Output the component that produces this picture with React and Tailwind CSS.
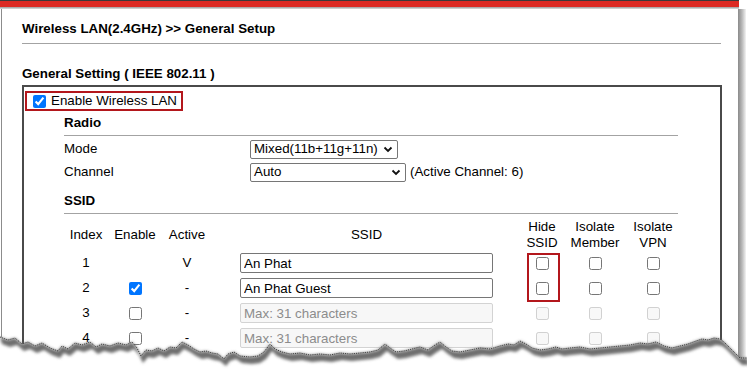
import React from "react";

const rows = [
  { index: 1, enable: null, active: "V", ssid: "An Phat", on: true },
  { index: 2, enable: true, active: "-", ssid: "An Phat Guest", on: true },
  { index: 3, enable: false, active: "-", ssid: "", on: false },
  { index: 4, enable: false, active: "-", ssid: "", on: false },
];

// torn paper edge along the bottom of the capture
const tear = [
  [0, 337], [8, 340], [15, 338], [22, 344], [28, 342], [35, 346], [42, 343], [50, 348],
  [58, 351], [62, 346], [68, 349], [75, 343], [82, 345], [90, 342], [96, 347], [102, 344],
  [110, 346], [118, 343], [126, 345], [132, 342], [137, 348], [141, 356], [146, 350],
  [152, 351], [158, 348], [164, 351], [170, 347], [176, 348], [182, 342], [188, 345],
  [194, 349], [200, 352], [206, 351], [212, 353], [218, 354], [224, 359], [228, 354],
  [234, 352], [240, 356], [250, 357], [258, 356], [264, 352], [270, 344], [275, 349],
  [282, 352], [290, 354], [300, 353], [310, 355], [320, 354], [330, 355], [340, 353],
  [350, 354], [360, 353], [370, 352], [378, 350], [385, 344], [390, 348], [396, 352],
  [404, 351], [412, 349], [420, 347], [428, 350], [435, 345], [440, 342], [446, 347],
  [452, 351], [460, 352], [470, 350], [480, 348], [490, 349], [500, 346], [508, 344],
  [514, 345], [520, 341], [526, 344], [532, 348], [540, 350], [548, 349], [556, 347],
  [562, 349], [570, 348], [580, 347], [590, 349], [600, 348], [610, 347], [620, 346],
  [630, 345], [640, 343], [648, 344], [656, 342], [664, 346], [672, 348], [680, 346],
  [688, 344], [696, 341], [702, 339], [708, 340], [714, 338], [720, 339], [724, 342],
  [728, 346], [732, 350], [736, 354], [740, 358], [747, 358],
];

const line = tear.map(([x, y]) => `${x},${y}`).join(" ");
const band =
  tear.map(([x, y]) => `${x},${y}`).join(" ") +
  " " +
  [...tear].reverse().map(([x, y]) => `${x + 2},${y + 7}`).join(" ");

function Chevron() {
  return (
    <svg width="10" height="7" viewBox="0 0 10 7" className="shrink-0">
      <polyline points="1.5,1.5 5,5 8.5,1.5" fill="none" stroke="#111" strokeWidth="1.8" />
    </svg>
  );
}

function Select({ value, width }) {
  return (
    <div
      className={`flex items-center justify-between h-[19px] border border-[#767676] rounded-[2px] pl-[3px] pr-[4px] ${width}`}
    >
      <span>{value}</span>
      <Chevron />
    </div>
  );
}

export default function App() {
  return (
    <div className="relative w-[747px] h-[370px] overflow-hidden bg-white text-black text-[13.33px] leading-[16px] font-['Liberation_Sans',Arial,sans-serif]">
      <div className="w-[739px]">
        <div className="h-px bg-[#3a3a3a]" />
        <div className="h-[6px] bg-[#dc2a23]" />
        <div className="h-[2px] bg-linear-to-b from-[#9c9c9c] to-[#dedede]" />
      </div>

      <div className="flex">
        <div className="ml-px w-[737px] h-[400px] border-l border-[#8c8c8c] pl-[20px]">
          <div className="mt-[12px] font-bold">Wireless LAN(2.4GHz) &gt;&gt; General Setup</div>
          <div className="mt-[6px] h-px w-[699px] bg-[#a3a3a3]" />

          <div className="mt-[22px] font-bold">General Setting ( IEEE 802.11 )</div>

          <div className="mt-[3px] w-[700px] h-[300px] border-2 border-[#4a4a4a]">
            <div className="ml-px mt-[4px] inline-flex items-center h-[20px] border-2 border-[#b3171c] pl-[6px] pr-[4px]">
              <input type="checkbox" defaultChecked className="w-[13px] h-[13px]" />
              <span className="ml-[5px]">Enable Wireless LAN</span>
            </div>

            <div className="pl-[40px]">
              <div className="mt-[3px] font-bold">Radio</div>
              <div className="mt-[4px] h-px w-[614px] bg-[#a3a3a3]" />

              <div className="mt-[2px] flex items-center h-[23px]">
                <span className="w-[186px]">Mode</span>
                <Select value="Mixed(11b+11g+11n)" width="w-[148px]" />
              </div>
              <div className="flex items-center h-[23px]">
                <span className="w-[186px]">Channel</span>
                <Select value="Auto" width="w-[156px]" />
                <span className="ml-[4px]">(Active Channel: 6)</span>
              </div>

              <div className="mt-[9px] font-bold">SSID</div>
              <div className="mt-[4px] h-px w-[614px] bg-[#a3a3a3]" />

              <div className="relative mt-[5px] grid grid-cols-[44px_54px_50px_28px_253px_27px_44px_62px_54px]">
                <div className="h-[32px] flex items-center justify-center">Index</div>
                <div className="h-[32px] flex items-center justify-center">Enable</div>
                <div className="h-[32px] flex items-center justify-center">Active</div>
                <div />
                <div className="h-[32px] flex items-center justify-center">SSID</div>
                <div />
                <div className="h-[32px] flex items-center justify-center text-center">
                  Hide
                  <br />
                  SSID
                </div>
                <div className="h-[32px] flex items-center justify-center text-center">
                  Isolate
                  <br />
                  Member
                </div>
                <div className="h-[32px] flex items-center justify-center text-center">
                  Isolate
                  <br />
                  VPN
                </div>

                {rows.map((r) => (
                  <React.Fragment key={r.index}>
                    <div className="h-[25px] flex items-center justify-center">{r.index}</div>
                    <div className="h-[25px] flex items-center justify-center">
                      {r.enable !== null && (
                        <input type="checkbox" defaultChecked={r.enable} className="w-[13px] h-[13px]" />
                      )}
                    </div>
                    <div className="h-[25px] flex items-center justify-center">{r.active}</div>
                    <div />
                    <div className="h-[25px] flex items-center">
                      {r.on ? (
                        <input
                          type="text"
                          defaultValue={r.ssid}
                          className="w-[253px] h-[20px] border border-[#767676] rounded-[2px] px-[3px] text-black"
                        />
                      ) : (
                        <input
                          type="text"
                          disabled
                          placeholder="Max: 31 characters"
                          className="w-[253px] h-[20px] border border-[#d3d3d3] rounded-[2px] px-[3px] bg-[#f7f7f7] placeholder:text-[#8c8c8c]"
                        />
                      )}
                    </div>
                    <div />
                    {[0, 1, 2].map((c) => (
                      <div key={c} className="h-[25px] flex items-center justify-center">
                        <input type="checkbox" disabled={!r.on} className="w-[13px] h-[13px]" />
                      </div>
                    ))}
                  </React.Fragment>
                ))}

                <div className="absolute left-[463px] top-[34px] w-[33px] h-[49px] border-2 border-[#b3171c]" />
              </div>
            </div>
          </div>
        </div>
        <div className="w-[8px] bg-linear-to-r from-[#8a8a8a] via-[#b8b8b8] to-[#f4f4f4]" />
      </div>

      <svg
        className="absolute left-0 top-[320px]"
        width="747"
        height="50"
        viewBox="0 320 747 50"
      >
        <defs>
          <filter id="soft" x="-5%" y="-50%" width="110%" height="200%">
            <feGaussianBlur stdDeviation="1.6" />
          </filter>
        </defs>
        <polygon points={`${line} 747,370 0,370`} fill="#ffffff" />
        <polygon points={band} fill="#6e6e6e" filter="url(#soft)" />
        <polyline points={line} fill="none" stroke="#222" strokeWidth="0.8" strokeDasharray="1.2 1" />
      </svg>
    </div>
  );
}
